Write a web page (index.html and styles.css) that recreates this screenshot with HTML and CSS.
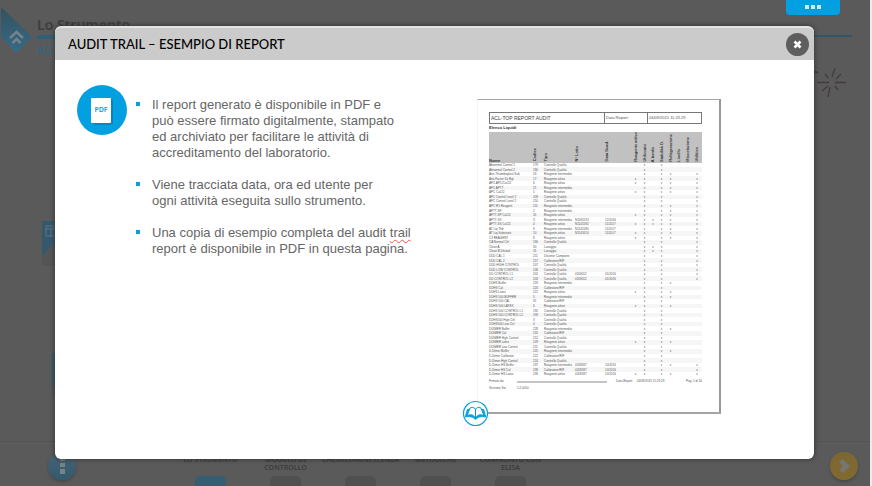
FILE: index.html
```html
<!DOCTYPE html>
<html lang="it">
<head>
<meta charset="utf-8">
<title>Audit trail – Esempio di report</title>
<link rel="stylesheet" href="styles.css">
</head>
<body>
<div class="scene">
  <header class="scene-head">
    <a class="home" href="#" aria-label="Home">
      <svg width="33" height="50" viewBox="0 0 33 50"><defs><linearGradient id="g" x1="0" y1="0" x2="0" y2="1"><stop offset="0" stop-color="#33515f"/><stop offset="1" stop-color="#366b87"/></linearGradient></defs><path d="M1 2 L32 32 L16 48 L1 32Z" fill="url(#g)"/><path d="M10 33 L16.500 27 L23 33 M12.500 38 L16.500 34 L20.500 38" fill="none" stroke="#75838b" stroke-width="2.500"/></svg>
    </a>
    <div class="scene-title">
      <h2>Lo Strumento</h2>
      <div class="rule"></div>
      <p>ACL</p>
    </div>
  </header>
  <svg class="spark" width="48" height="34" viewBox="0 0 48 34"><g fill="none" stroke="#443a42" stroke-width="1.300"><path d="M19 16.500H31M37 16.500H48M34 11L37 2M38 13L43 8M30 12L27 8M37 20L40 24M30 20L24 25M32 21L30 31"/></g><path d="M15 8Q17 4 20 7" stroke="#3e3e3e" stroke-width="2" fill="none"/></svg>
  <svg class="card-one" width="30" height="46" viewBox="0 0 30 46"><rect width="30" height="45" rx="2" fill="#555"/><path d="M0 0H30V5L0 35Z" fill="#34596d"/><path d="M4 5H28V15H4Z" fill="none" stroke="#607480"/><path d="M4 8H28M9 8V15M14 8V15" stroke="#607480"/></svg>
  <svg class="card-two" width="20" height="44" viewBox="0 0 20 44"><rect width="20" height="44" fill="#555"/><path d="M0 0H20V20L0 34Z" fill="#34596d"/></svg>
  <footer class="scene-foot">
    <button class="round info" type="button" aria-label="Menu"><svg width="28" height="28" viewBox="0 0 28 28"><path d="M12 5H17V9H12ZM12 11H17V15H12ZM12 17H17V22H12Z" fill="#76838a"/></svg></button>
    <nav class="steps">
      <a class="active" href="#"><span>LO STRUMENTO</span></a>
      <a href="#"><span>MODULO DI CONTROLLO</span></a>
      <a href="#"><span>CHEMILUMINESCENZA</span></a>
      <a href="#"><span>METODICHE</span></a>
      <a href="#"><span>CONFRONTO CON<br>ELISA</span></a>
    </nav>
    <button class="round next" type="button" aria-label="Avanti"><svg width="28" height="28" viewBox="0 0 28 28"><path d="M9 10L13 7L20 14L13 21L9 18L13 14Z" fill="#777570"/></svg></button>
  </footer>
</div>
<button class="more" type="button" aria-label="Altro"><i></i><i></i><i></i></button>

<main class="dialog" role="dialog" aria-labelledby="title">
  <header class="bar">
    <h1 id="title">AUDIT TRAIL – ESEMPIO DI REPORT</h1>
    <button class="close" type="button" aria-label="Chiudi"><svg width="23" height="23" viewBox="0 0 23 23"><path d="M8.500 8.500L14.500 14.500M14.500 8.500L8.500 14.500" stroke="#fff" stroke-width="2.600"/></svg></button>
  </header>
  <section class="content">
    <div class="pdf"><svg width="50" height="50" viewBox="0 0 50 50"><rect x="16" y="14" width="20" height="26" rx="2" fill="#0485c5"/><rect x="14" y="13" width="20" height="25" rx="1" fill="#fff"/></svg><span>PDF</span></div>
    <ul class="points">
      <li>Il report generato è disponibile in PDF e<br>può essere firmato digitalmente, stampato<br>ed archiviato per facilitare le attività di<br>accreditamento del laboratorio.</li>
      <li>Viene tracciata data, ora ed utente per<br>ogni attività eseguita sullo strumento.</li>
      <li>Una copia di esempio completa del audit <span class="typo">trail</span><br>report è disponibile in PDF in questa pagina.</li>
    </ul>
    <div class="page">
      <div class="page-head"><b>ACL-TOP REPORT AUDIT</b><span>Data Report:</span><span>04/09/2015 11:23:29</span></div>
      <h3>Elenco Liquidi</h3>
      <table>
        <colgroup><col class="c-name"><col class="c-num"><col class="c-type"><col class="c-lot"><col class="c-exp"><col class="n"><col class="n"><col class="s"><col class="n"><col class="n"><col class="s"><col class="n"><col></colgroup>
        <thead><tr><th>Nome</th><th><span>Codice</span></th><th><span>Tipo</span></th><th><span>N° Lotto</span></th><th><span>Data Scad.</span></th><th><span>Reagente attivo</span></th><th><span>Utilizzato</span></th><th><span>A bordo</span></th><th><span>Stabilità O.</span></th><th><span>Refrigerazione</span></th><th><span>Livello</span></th><th><span>Miscelazione</span></th><th><span>Utilities</span></th></tr></thead>
        <tbody id="rows"></tbody>
      </table>
      <div class="page-foot">
        <span>Firmato da:</span><span class="line"></span><span>Data Report:</span><span>04/09/2015 11:23:29</span><span class="num">Pag. 1 di 50</span>
        <span>Versione Sw:</span><span>5.2.0010</span>
      </div>
      <a class="book" href="#" aria-label="Apri il report"><svg width="27" height="27" viewBox="0 0 27 27"><circle cx="13.500" cy="13.500" r="12" fill="#fff" stroke="#089fd9" stroke-width="1.200"/><path d="M5 9L2.500 17.500Q10 16 13.500 20Q17 16 24.500 17.500L22 9" fill="#16a4dc"/><path d="M13.500 18C11 14 8 14 5 16L8 8Q11 6 13.500 9Q16 6 19 8L22 16C19 14 16 14 13.500 18Z" fill="#fff" stroke="#0799d2"/><path d="M13.500 9V19" stroke="#0799d2"/></svg></a>
    </div>
  </section>
</main>
<script src="script.js"></script>
</body>
</html>
```
FILE: styles.css
```css
* { box-sizing: border-box; }
body { margin: 0; min-height: 100vh; display: grid; background: #ececec; font-family: "Liberation Sans", Arial, sans-serif; overflow: hidden; }
h1, h2, h3, p, ul { margin: 0; padding: 0; font-weight: normal; }
button { border: 0; padding: 0; cursor: pointer; }
a { text-decoration: none; color: inherit; }
svg { display: block; }

.scene, .dialog { grid-area: 1 / 1; }
.scene { position: relative; display: flex; flex-direction: column; justify-content: space-between; height: 100vh; margin-right: 2px; background: #5a5a5a; overflow: hidden; }
.scene-head { display: flex; gap: 4px; padding: 5px 18px 0 0; }
.scene-title { flex: 1; padding-top: 10px; font-family: "Noto Sans", sans-serif; }
.scene-title h2 { font-size: 14px; line-height: 20px; font-weight: 600; color: #3e3e3e; }
.scene-title p { padding-top: 5px; font-size: 10px; line-height: 16px; color: #28698a; }
.rule { height: 2px; background: #31566a; }
.rule::before { content: ""; display: block; width: 60px; height: 4px; background: #2f6079; }
.spark { position: absolute; right: 24px; top: 66px; }
.card-one { position: absolute; left: 42px; top: 221px; }
.card-two { position: absolute; left: 52px; top: 353px; }
.scene-foot { display: flex; align-items: flex-start; height: 45px; padding: 10px 12px 0 48px; border-top: 1px solid #535353; }
.round { width: 28px; height: 28px; border-radius: 50%; box-shadow: 0 2px 3px #484848; }
.info { background: linear-gradient(#496371, #315a70); }
.next { background: linear-gradient(#7b6734, #826a2d); margin-left: auto; }
.steps { display: grid; grid-template-columns: repeat(5, 75px); margin-left: 97px; padding-top: 4px; }
.steps a { display: flex; flex-direction: column; align-items: center; font: 600 7px/8px "Noto Sans", sans-serif; color: #3c3c3c; text-align: center; }
.steps span { height: 20px; }
.steps a::after { content: ""; width: 31px; height: 30px; border-radius: 5px; background: #505050; }
.steps .active::after { background: #365e73; }

.more { position: absolute; right: 32px; top: 0; display: flex; justify-content: center; gap: 2px; width: 54px; height: 15px; padding-top: 5px; align-items: flex-start; background: #03a0e1; border-radius: 0 0 4px 4px; }
.more i { width: 4px; height: 4px; background: #d5e8fb; }

.dialog { position: relative; margin: 26px 58px 27px 55px; background: #fff; border-radius: 6px; overflow: hidden; border-top: 2px solid #e4e4e4; box-shadow: 0 0 5px #2d2d2d; }
.bar { display: flex; align-items: center; justify-content: space-between; height: 32px; padding: 0 5px 0 13px; background: #cbcbcb; }
.bar h1 { font: 500 13px/20px Lato, sans-serif; color: #000; }
.close { width: 23px; height: 23px; border-radius: 50%; background: #5e5e5e; }

.content { display: flex; align-items: flex-start; padding: 25px 93px 0 22px; }
.pdf { display: grid; place-items: center; width: 50px; height: 50px; border-radius: 50%; background: #03a0e1; }
.pdf > * { grid-area: 1 / 1; }
.pdf span { font: 600 7px/8px "Noto Sans", sans-serif; color: #03a0e1; padding-right: 2px; }
.points { flex: 1; padding: 12px 0 0 9px; list-style: none; font-size: 13px; line-height: 16px; color: #666; }
.points li { position: relative; padding-left: 16px; margin-bottom: 16px; white-space: nowrap; }
.points li::before { content: ""; position: absolute; left: 0; top: 5px; width: 4px; height: 4px; background: #03a0e1; }
.typo { text-decoration: underline wavy #ef5350 1px; text-underline-offset: 2px; }

.page { position: relative; width: 244px; height: 315px; margin-top: 14px; padding: 12px 17px 0 11px; border: 1px solid #a5a5a5; border-left-color: #f4f4f4; border-right: 2px solid #999; border-bottom: 2px solid #a5a5a5; font: 3px/5px "Liberation Sans", sans-serif; color: #555; }
.page-head { display: grid; grid-template-columns: 114px 43px 1fr; height: 12px; line-height: 10px; border: 1px solid #777; }
.page-head > * { padding-left: 1px; overflow: hidden; white-space: nowrap; }
.page-head span { border-left: 1px solid #777; font-size: 4px; color: #555; }
.page-head b { font: 5px/10px "Liberation Sans", sans-serif; color: #444; }
.page h3 { font: bold 4px/8px "Liberation Sans", sans-serif; color: #333; }
.page table { width: 100%; height: 245px; table-layout: fixed; border-collapse: collapse; white-space: nowrap; }
.page th, .page td { padding: 0; line-height: 4px; text-align: left; }
.page thead tr { height: 30px; background: #c1c1c1; }
.page th { vertical-align: bottom; font-size: 4px; color: #333; }
.page th span { writing-mode: vertical-rl; transform: rotate(180deg); display: inline-block; }
.page tbody tr:nth-child(even) { background: #f6f6f6; }
.c-name { width: 44px; } .c-num { width: 11px; } .c-type { width: 31px; }
.c-lot { width: 30px; } .c-exp { width: 26px; } .n { width: 9px; } .s { width: 8px; }
.page td:nth-child(n+6), .page th:nth-child(n+6) { text-align: center; }
.page-foot { display: grid; grid-template-columns: 28px 99px 21px 40px 1fr; row-gap: 2px; padding-top: 2px; white-space: nowrap; }
.page-foot .line { width: 90px; height: 2px; margin-top: 2px; background: #c4c4c4; }
.page-foot .num { text-align: right; }
.book { position: absolute; left: -16px; bottom: -15px; }
@media (max-width: 760px) { .content { flex-wrap: wrap; } }
```
FILE: script.js
```js
// name | code | type | lot | expiry | marked columns (a–h)
const R = "Reagente intermedio", A = "Reagente attivo", C = "Controllo Qualità", K = "Calibratore/RIF";
const rows = [
  ["Abnormal Control 1", "179", C, "", "", "bd"], ["Abnormal Control 2", "180", C, "", "", "bd"],
  ["Anti-Thromboplast Sub", "18", R, "", "", "bdeh"], ["Anti-Factor Xa Rgt", "17", A, "", "", "abdeh"],
  ["APC APC/CaCl2", "6", A, "", "", "abdeh"], ["APC APTT", "21", R, "", "", "bdeh"],
  ["APC CaCl2", "5", A, "", "", "abdeh"], ["APC Control Level 1", "209", C, "", "", "bdh"],
  ["APC Control Level 2", "210", C, "", "", "bdh"], ["APC R1 Reagent", "211", R, "", "", "bdeh"],
  ["APTT-SP", "2", R, "", "", "bdeh"], ["APTT-SP CaCl2", "31", A, "", "", "abdeh"],
  ["APTT-SS", "3", R, "N1091531", "12/2016", "bcdeh"], ["APTT-SS CaCl2", "4", A, "N1141592", "11/2017", "abcdeh"],
  ["AT Liq Thb", "9", R, "N1141580", "11/2017", "bdeh"], ["AT Liq Substrate", "10", A, "N1141614", "11/2017", "abdeh"],
  ["C3 REAGENT", "8", A, "", "", "abdeh"], ["CA Normal Ctrl", "190", C, "", "", "bdh"],
  ["Clean A", "30", "Lavaggio", "", "", "bcdh"], ["Clean B Diluted", "31", "Lavaggio", "", "", "bcdh"],
  ["DDD CAL 1", "211", "Diluente Campione", "", "", "bdh"], ["DDD CAL 2", "217", K, "", "", "bdh"],
  ["DDD HIGH CONTROL", "207", C, "", "", "bdh"], ["DDD LOW CONTROL", "208", C, "", "", "bdh"],
  ["DD CONTROL L1", "202", C, "0109012", "01/2016", "bdh"], ["DD CONTROL L2", "203", C, "0109012", "01/2016", "bdh"],
  ["DDHS Buffer", "219", R, "", "", "bde"], ["DDHS Cal", "220", K, "", "", "bd"],
  ["DDHS Latex", "221", A, "", "", "abde"], ["DDHS 500 BUFFER", "5", R, "", "", "bde"],
  ["DDHS 500 CAL", "91", K, "", "", "bd"], ["DDHS 500 LATEX", "6", A, "", "", "abde"],
  ["DDHS 500 CONTROL L1", "192", C, "", "", "bd"], ["DDHS 500 CONTROL L2", "193", C, "", "", "bd"],
  ["DDHS500 High Ctrl", "3", C, "", "", "bd"], ["DDHS500 Low Ctrl", "4", C, "", "", "bd"],
  ["DDIMER Buffer", "228", R, "", "", "bde"], ["DDIMER Cal", "231", K, "", "", "bd"],
  ["DDIMER High Control", "212", C, "", "", "bd"], ["DDIMER Latex", "229", A, "", "", "abde"],
  ["DDIMER Low Control", "211", C, "", "", "bd"], ["D-Dimer Buffer", "225", R, "", "", "bde"],
  ["D-Dimer Calibrator", "222", K, "", "", "bd"], ["D-Dimer High Control", "224", C, "", "", "bd"],
  ["D-Dimer HS Buffer", "237", R, "0208337", "10/2016", "bdeh"], ["D-Dimer HS Cal", "238", K, "0208337", "10/2016", "bdh"],
  ["D-Dimer HS Latex", "239", A, "0208337", "10/2016", "abdeh"]
];
document.getElementById("rows").innerHTML = rows.map(r =>
  "<tr>" + [...r.slice(0, 5), ...[..."abcdefgh"].map(k => r[5].includes(k) ? "x" : "")]
    .map(v => "<td>" + v + "</td>").join("") + "</tr>").join("");
```
